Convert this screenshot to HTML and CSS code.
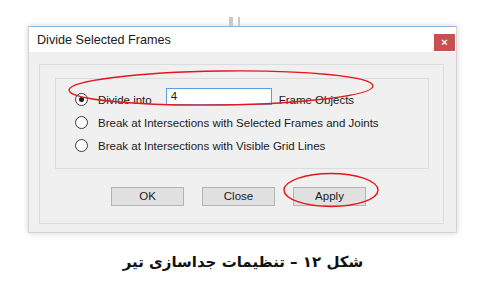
FILE: index.html
```html
<!DOCTYPE html>
<html lang="fa">
<head>
  <meta charset="UTF-8">
  <meta name="viewport" content="width=device-width, initial-scale=1.0">
  <title>Divide Selected Frames</title>
  <link rel="stylesheet" href="styles.css">
</head>
<body>

  <!-- Window behind the dialog -->
  <div class="behind">
    <span class="mark wide"></span>
    <span class="mark"></span>
  </div>

  <!-- Dialog -->
  <div class="dialog">
    <div class="titlebar">
      <span class="title">Divide Selected Frames</span>
      <span class="close">&#215;</span>
    </div>

    <div class="dialog-body">
      <div class="frame">
        <div class="group">
          <div class="row">
            <span class="radio checked"></span>
            <span class="label">Divide into</span>
            <span class="textbox">4</span>
            <span class="label">Frame Objects</span>
          </div>
          <div class="row">
            <span class="radio"></span>
            <span class="label">Break at Intersections with Selected Frames and Joints</span>
          </div>
          <div class="row">
            <span class="radio"></span>
            <span class="label">Break at Intersections with Visible Grid Lines</span>
          </div>
        </div>

        <div class="buttons">
          <span class="btn">OK</span>
          <span class="btn">Close</span>
          <span class="btn">Apply</span>
        </div>
      </div>
    </div>
  </div>

  <!-- Caption -->
  <p class="caption">شکل ۱۲ – تنظیمات جداسازی تیر</p>

  <!-- Red marks drawn over the screenshot -->
  <svg class="marks" width="480" height="293" viewBox="0 0 480 293">
    <ellipse cx="221" cy="88" rx="152" ry="17" transform="rotate(-0.8 221 88)" />
    <ellipse cx="331" cy="190" rx="47" ry="16.5" />
  </svg>

</body>
</html>
```

FILE: styles.css
```css
/* Basics */
body {
  margin: 0;
  padding: 0;
  position: relative;
  background: white;
  font-family: 'Liberation Sans', Arial, sans-serif;
  color: #1a1a1a;
  height: 293px;
  overflow: hidden;
}

/* Window behind */
.behind {
  height: 26px;
  display: flex;
  align-items: flex-end;
  gap: 5px;
  padding-left: 229px;
  box-sizing: border-box;
}

.mark {
  width: 2px;
  height: 9px;
  background: #c9c9c9;
}

.mark.wide {
  width: 4px;
}

/* Dialog */
.dialog {
  margin-left: 28px;
  width: 429px;
  height: 207px;
  box-sizing: border-box;
  border: 1px solid #d4d4d4;
  border-top-color: #8fb5e0;
  box-shadow: 0 0 6px rgba(0, 0, 0, 0.18);
  display: flex;
  flex-direction: column;
}

.titlebar {
  height: 25px;
  background: white;
  display: flex;
  align-items: flex-start;
  padding-left: 8px;
}

.title {
  font-size: 12.6px;
  line-height: 26px;
  color: #202020;
}

.close {
  margin-left: auto;
  margin-right: 1px;
  margin-top: 7px;
  width: 21px;
  height: 17px;
  background: #c75050;
  color: white;
  font-size: 11px;
  font-weight: bold;
  line-height: 17px;
  text-align: center;
}

.dialog-body {
  flex: 1;
  background: #f0f0f0;
  padding: 12px 12px 8px 10px;
}

.frame {
  height: 160px;
  box-sizing: border-box;
  border: 1px solid #dcdcdc;
  padding: 13px 14px 0 15px;
}

.group {
  height: 91px;
  box-sizing: border-box;
  border: 1px solid #dcdcdc;
  padding: 9px 0 0 19px;
}

.row {
  height: 23px;
  display: flex;
  align-items: center;
  font-size: 11.5px;
}

.radio {
  width: 13px;
  height: 13px;
  box-sizing: border-box;
  border: 1px solid #3a3a3a;
  border-radius: 50%;
  background: white;
  margin-right: 10px;
  display: flex;
  align-items: center;
  justify-content: center;
}

.radio.checked::after {
  content: "";
  width: 5px;
  height: 5px;
  border-radius: 50%;
  background: #1a1a1a;
}

.label {
  white-space: nowrap;
}

.textbox {
  width: 106px;
  height: 17px;
  box-sizing: border-box;
  border: 1px solid #5b9fe0;
  background: white;
  margin: -6px 7px 0 14px;
  padding-left: 4px;
  line-height: 15px;
}

.buttons {
  display: flex;
  gap: 18px;
  margin-top: 18px;
  padding-left: 56px;
}

.btn {
  width: 73px;
  height: 19px;
  box-sizing: border-box;
  border: 1px solid #b4b4b4;
  background: #e1e1e1;
  font-size: 11.5px;
  line-height: 17px;
  text-align: center;
}

/* Caption */
.caption {
  margin: 19px 0 0;
  direction: rtl;
  text-align: center;
  font-family: 'DejaVu Sans', sans-serif;
  font-weight: bold;
  font-size: 15px;
  line-height: 20px;
  color: #111;
  padding-left: 6px;
}

/* Red annotation marks */
.marks {
  position: absolute;
  top: 0;
  left: 0;
  pointer-events: none;
}

.marks ellipse {
  fill: none;
  stroke: #e5161c;
  stroke-width: 1.4;
}
```
